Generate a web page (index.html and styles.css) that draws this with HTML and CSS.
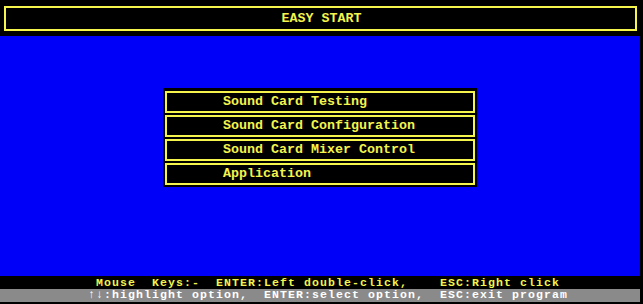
FILE: index.html
```html
<!DOCTYPE html>
<html lang="en">

<head>
    <meta charset="UTF-8">
    <meta name="viewport" content="width=device-width, initial-scale=1.0">
    <title>Easy Start</title>
    <link rel="stylesheet" href="styles.css">
</head>

<body>
    <div class="screen">
        <div class="header">
            <div class="title-box">EASY START</div>
        </div>

        <div class="main">
            <div class="menu">
                <div class="menu-item">Sound Card Testing</div>
                <div class="menu-item">Sound Card Configuration</div>
                <div class="menu-item">Sound Card Mixer Control</div>
                <div class="menu-item">Application</div>
            </div>
        </div>

        <div class="status mouse-line">Mouse  Keys:-  ENTER:Left double-click,    ESC:Right click</div>
        <div class="status key-line">↑↓:highlight option,  ENTER:select option,  ESC:exit program</div>
    </div>
</body>

</html>
```

FILE: styles.css
```css
body {
    margin: 0;
    padding: 0;
    background-color: #000;
    font-family: "Liberation Mono", "DejaVu Sans Mono", monospace;
    font-weight: bold;
    font-size: 13.33px;
}

.screen {
    width: 640px;
    padding-top: 1px;
    background-color: #000;
}

.header {
    height: 35px;
    padding: 5px 3px 0 4px;
    box-sizing: border-box;
}

.title-box {
    height: 25px;
    border: 2px solid #f4f44c;
    box-sizing: border-box;
    color: #f4f44c;
    text-align: center;
    line-height: 22px;
    padding-left: 2px;
}

.main {
    height: 240px;
    background-color: #0000f8;
    display: flex;
    justify-content: center;
    align-items: flex-start;
    padding-top: 52px;
    box-sizing: border-box;
}

.menu {
    width: 314px;
    background-color: #000;
    padding: 3px 2px 2px 2px;
    box-sizing: border-box;
    display: flex;
    flex-direction: column;
    gap: 2px;
}

.menu-item {
    height: 22px;
    border: 2px solid #f4f44c;
    box-sizing: border-box;
    color: #f4f44c;
    line-height: 18px;
    padding-left: 56px;
}

.status {
    height: 12px;
    line-height: 12px;
    white-space: pre;
    font-size: 11.5px;
    letter-spacing: 1.1px;
}

.mouse-line {
    background-color: #000;
    color: #f4f44c;
    padding-left: 96px;
    padding-top: 1px;
}

.key-line {
    background-color: #8a8a8a;
    color: #fff;
    padding-left: 88px;
    height: 13px;
}
```
